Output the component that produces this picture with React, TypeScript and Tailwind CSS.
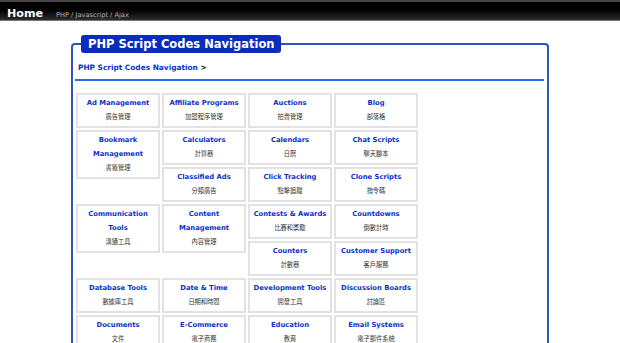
import React from 'react';

const categories: [string, string][] = [
  ['Ad Management', '廣告管理'],
  ['Affiliate Programs', '加盟程序管理'],
  ['Auctions', '拍賣管理'],
  ['Blog', '部落格'],
  ['Bookmark Management', '書籤管理'],
  ['Calculators', '計算器'],
  ['Calendars', '日曆'],
  ['Chat Scripts', '聊天腳本'],
  ['Classified Ads', '分類廣告'],
  ['Click Tracking', '點擊追蹤'],
  ['Clone Scripts', '指令碼'],
  ['Communication Tools', '溝通工具'],
  ['Content Management', '內容管理'],
  ['Contests & Awards', '比賽和獎勵'],
  ['Countdowns', '倒數計時'],
  ['Counters', '計數器'],
  ['Customer Support', '客戶服務'],
  ['Database Tools', '數據庫工具'],
  ['Date & Time', '日期和時間'],
  ['Development Tools', '開發工具'],
  ['Discussion Boards', '討論區'],
  ['Documents', '文件'],
  ['E-Commerce', '電子商務'],
  ['Education', '教育'],
  ['Email Systems', '電子郵件系統'],
];

function CategoryBox({ name, zh }: { name: string; zh: string }) {
  return (
    <div className="float-left w-[84px] m-[1px] border-2 border-[#e2e2e2] bg-white px-[1px] pt-[1px] pb-[2px] text-center">
      <a href="#" className="block text-[6.8px] leading-[14px] font-bold text-[#0a33c8]">
        {name}
      </a>
      <div className="text-[6.25px] leading-[14px] text-[#333] font-['Noto_Sans_CJK_TC',sans-serif]">{zh}</div>
    </div>
  );
}

export default function App() {
  return (
    <div className="min-h-[343px] bg-white font-['DejaVu_Sans',sans-serif] overflow-hidden">
      {/* top bar */}
      <div className="h-[21px] border-t-2 border-b border-t-[#444] border-b-[#777] bg-gradient-to-b from-[#000] via-[#050505] to-[#2e2e2e] flex items-baseline pl-[7px] pt-[4px]">
        <span className="text-[11.1px] leading-[15px] font-bold text-white">Home</span>
        <span className="ml-[13px] text-[6.65px] text-[#b5b5b5]">PHP / Javascript / Ajax</span>
      </div>

      <fieldset className="mx-auto mt-[14px] w-[478px] border-2 border-b-0 border-[#3355bb] rounded-t-[4px] pl-[2px] pr-[3px] min-h-[320px]">
        <legend className="ml-[6px] h-[18px] rounded-[3px] bg-[#0b2dbd] pl-[7px] pr-[6px] text-[11.5px] leading-[18px] font-bold text-white">
          PHP Script Codes Navigation
        </legend>

        <div className="pt-[9px] pl-[3px] text-[7.4px] leading-[12px] font-bold">
          <a href="#" className="text-[#0a33c8]">PHP Script Codes Navigation</a>
          <span className="text-black"> &gt;</span>
        </div>
        <div className="mt-[5px] h-[2px] bg-[#2a6bf0]" />

        <div className="mt-[11px] w-[344px] after:content-[''] after:block after:clear-both">
          {categories.map(([name, zh]) => (
            <CategoryBox key={name} name={name} zh={zh} />
          ))}
        </div>
      </fieldset>
    </div>
  );
}
